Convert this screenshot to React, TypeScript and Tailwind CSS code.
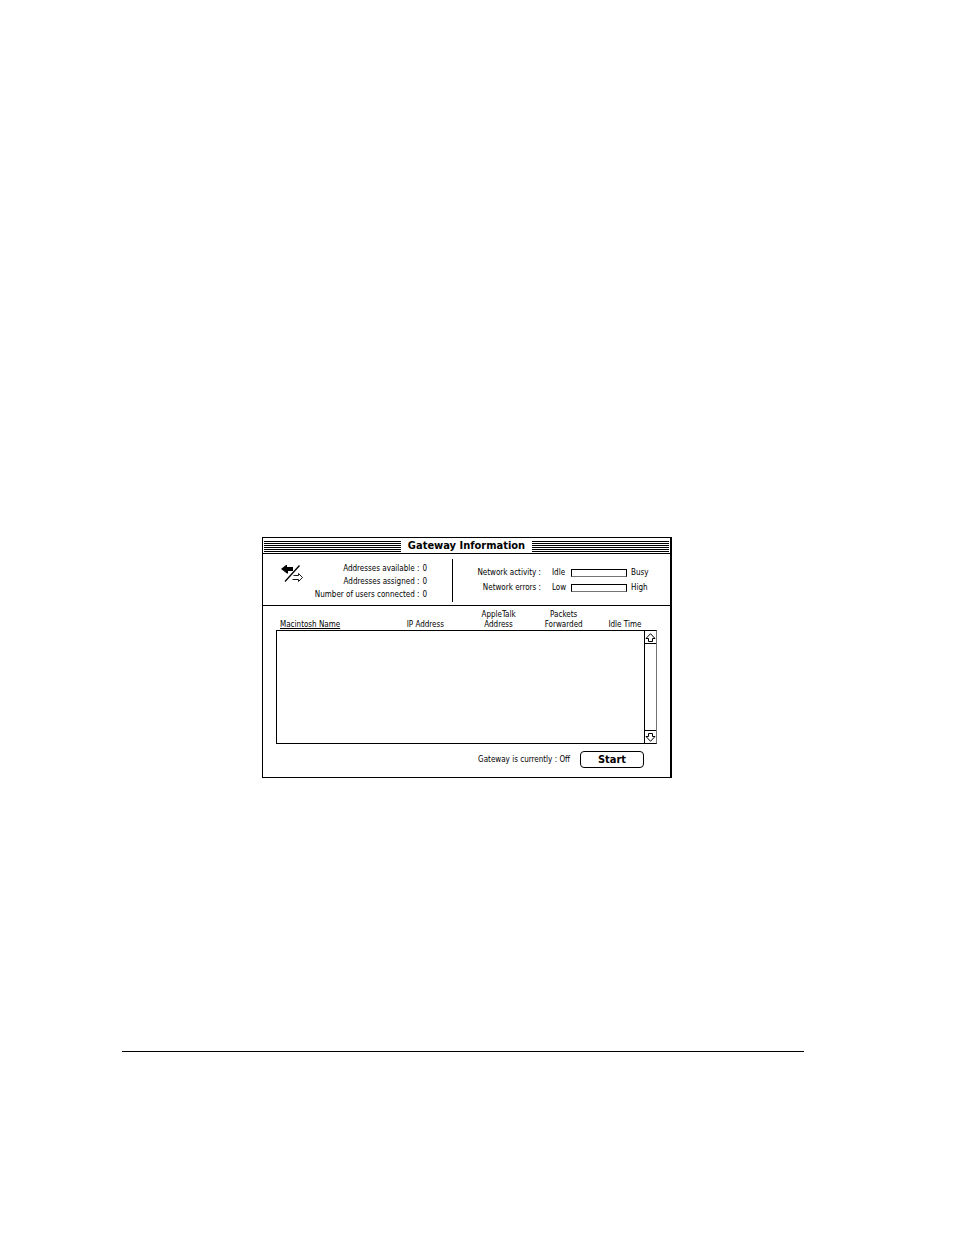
import React from "react";

const columns = [
  { lines: ["Macintosh Name"], width: "w-[112px]" },
  { lines: ["IP Address"], width: "w-[74px]" },
  { lines: ["AppleTalk", "Address"], width: "w-[72px]" },
  { lines: ["Packets", "Forwarded"], width: "w-[58px]" },
  { lines: ["Idle Time"], width: "w-[64px]" },
];

const counts = [
  { label: "Addresses available :", value: 0 },
  { label: "Addresses assigned :", value: 0 },
  { label: "Number of users connected :", value: 0 },
];

const meters = [
  { label: "Network activity :", low: "Idle", high: "Busy" },
  { label: "Network errors :", low: "Low", high: "High" },
];

function Stripes() {
  return (
    <div className="flex flex-1 flex-col gap-px pt-px" aria-hidden="true">
      <div className="h-px bg-black" />
      <div className="h-px bg-black" />
      <div className="h-px bg-black" />
      <div className="h-px bg-black" />
      <div className="h-px bg-black" />
      <div className="h-px bg-black" />
    </div>
  );
}

function GatewayIcon() {
  return (
    <svg width="23" height="18" viewBox="0 0 23 18" aria-hidden="true">
      <path d="M0 4L5 0H6V2H12V6H7V8.500H6Z" fill="#000" />
      <path d="M18.500 0.500L4 16.500" stroke="#000" strokeWidth="1.3" />
      <path
        d="M12.500 10.500H17.500V8.500L21.500 12.500L17.500 16.500V14.500H11.500"
        fill="#fff"
        stroke="#000"
        strokeWidth="0.9"
      />
    </svg>
  );
}

function ScrollArrow({ down }: { down?: boolean }) {
  return (
    <svg
      width="11"
      height="9"
      viewBox="0 0 11 9"
      className={down ? "rotate-180" : ""}
      aria-hidden="true"
    >
      <path d="M5.500 0.700L10 5.500H7.500V8.500H3.500V5.500H1Z" fill="#fff" stroke="#000" />
    </svg>
  );
}

export default function App() {
  return (
    <div className="min-h-screen bg-white pt-[537px] pr-[150px] pb-16 pl-[122px] font-['DejaVu_Sans_Condensed','DejaVu_Sans',sans-serif] text-[8px] leading-[10px] text-black">
      <main className="pl-[140px]">
        <section className="w-full max-w-[410px] border border-r-2 border-black" aria-labelledby="title">
          <header className="flex h-4 items-center gap-[7px] border-b border-black px-px">
            <Stripes />
            <h1 id="title" className="text-[11px] leading-[14px] font-bold">
              Gateway Information
            </h1>
            <Stripes />
          </header>

          <div className="flex h-[52px] border-b border-black">
            <div className="flex flex-1 justify-between pt-2 pl-[18px]">
              <div className="pt-[3px]">
                <GatewayIcon />
              </div>
              <dl className="pr-[25px] text-right leading-[13px]">
                {counts.map((c) => (
                  <div key={c.label} className="flex justify-end gap-[3px]">
                    <dt>{c.label}</dt>
                    <dd>{c.value}</dd>
                  </div>
                ))}
              </dl>
            </div>
            <div className="mt-[5px] mb-[3px] w-px bg-black" />
            <div className="flex w-[217px] flex-col gap-[5px] pt-[14px]">
              {meters.map((m) => (
                <div key={m.label} className="flex items-center">
                  <span className="w-[88px] text-right">{m.label}</span>
                  <span className="w-[26px] pl-[11px]">{m.low}</span>
                  <div
                    role="meter"
                    aria-label={m.label}
                    aria-valuenow={0}
                    aria-valuemin={0}
                    aria-valuemax={100}
                    className="mx-1 h-2 w-14 border border-black border-b-neutral-500"
                  />
                  <span>{m.high}</span>
                </div>
              ))}
            </div>
          </div>

          <div className="px-[13px]">
            <table className="w-full table-fixed">
              <thead>
                <tr>
                  {columns.map((c, i) => (
                    <th
                      key={c.lines[0]}
                      scope="col"
                      className={`${c.width} h-6 align-bottom font-normal ${i === 0 ? "pl-1 text-left underline underline-offset-1" : "text-center"}`}
                    >
                      {c.lines.map((l) => (
                        <span key={l} className="block whitespace-nowrap">
                          {l}
                        </span>
                      ))}
                    </th>
                  ))}
                </tr>
              </thead>
            </table>
            <div className="flex h-[114px] border border-black border-r-neutral-500">
              <div className="flex-1" />
              <div className="box-content flex w-[11px] flex-col justify-between border-l border-black">
                <button type="button" aria-label="Scroll up" className="flex h-[13px] items-center justify-center border-b border-black">
                  <ScrollArrow />
                </button>
                <button type="button" aria-label="Scroll down" className="flex h-[13px] items-center justify-center border-t border-black">
                  <ScrollArrow down />
                </button>
              </div>
            </div>
          </div>

          <footer className="flex items-center justify-end gap-[10px] pt-[7px] pr-[26px] pb-[9px]">
            <p>Gateway is currently : Off</p>
            <button
              type="button"
              className="h-[17px] w-16 rounded-[4px] border border-black text-[11px] leading-[14px] font-bold"
            >
              Start
            </button>
          </footer>
        </section>
      </main>
      <hr className="mt-[273px] border-t border-black" />
    </div>
  );
}
